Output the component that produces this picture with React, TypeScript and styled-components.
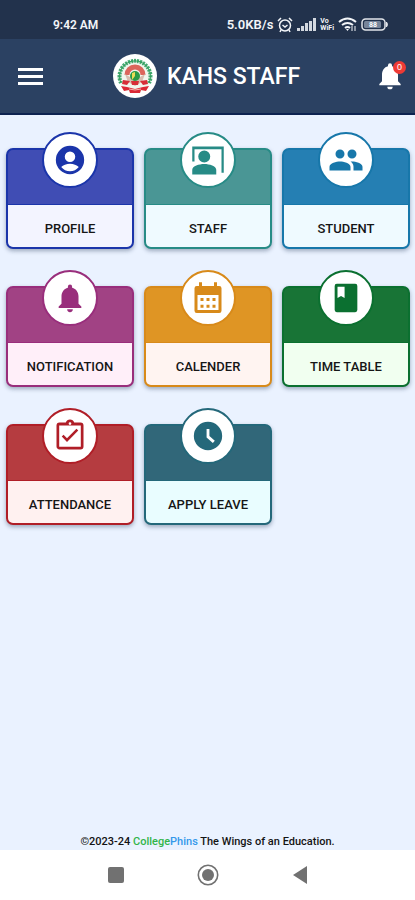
import React from "react";
import styled, { createGlobalStyle } from "styled-components";

const GlobalStyle = createGlobalStyle`
  *, *::before, *::after { box-sizing: border-box; }
  body {
    margin: 0;
    background: #eaf2ff;
    font-family: Roboto, "Liberation Sans", sans-serif;
    color: #141414;
  }
`;

const Screen = styled.div`
  min-height: 100vh;
  display: flex;
  flex-direction: column;
`;

const StatusBar = styled.div`
  display: flex;
  align-items: center;
  justify-content: space-between;
  height: 39px;
  padding: 10px 26px 0 53px;
  background: #22324c;
  color: #f3f5f8;
  font-size: 12px;
  font-weight: 600;
`;

const StatusGroup = styled.div`
  display: flex;
  align-items: center;
  gap: 4px;
  svg { display: block; }
`;

const Speed = styled.span`
  font-size: 13px;
`;

const NetLabel = styled.span`
  display: flex;
  flex-direction: column;
  font-size: 7px;
  line-height: 7px;
  font-weight: 700;
`;

const TopBar = styled.header`
  display: flex;
  align-items: center;
  justify-content: space-between;
  height: 76px;
  padding: 0 9px 0 15px;
  background: #2b4162;
  border-bottom: 2px solid #0e2350;
  color: #ffffff;
`;

const IconButton = styled.button`
  position: relative;
  display: flex;
  align-items: center;
  justify-content: center;
  width: 32px;
  height: 40px;
  padding: 0;
  border: 0;
  background: none;
  color: inherit;
  cursor: pointer;
`;

const Count = styled.span`
  position: absolute;
  top: 5px;
  right: 0;
  width: 13px;
  height: 13px;
  border-radius: 50%;
  background: #ee3a35;
  font-size: 9px;
  line-height: 13px;
  text-align: center;
`;

const Brand = styled.div`
  display: flex;
  align-items: center;
  gap: 10px;
  margin-right: 8px;
  svg { display: block; }
`;

const Title = styled.h1`
  margin: 0;
  padding-top: 2px;
  font-size: 23px;
  line-height: 32px;
  font-weight: 500;
  white-space: nowrap;
`;

const Content = styled.main`
  flex: 1;
  padding: 33px 5px 24px 6px;
`;

const Grid = styled.div`
  display: grid;
  grid-template-columns: repeat(3, 1fr);
  gap: 37px 10px;
`;

const Card = styled.button<{ $main: string; $edge: string; $tint: string }>`
  position: relative;
  display: flex;
  flex-direction: column;
  align-items: stretch;
  height: 101px;
  padding: 0;
  border: 2px solid ${(p) => p.$edge};
  border-radius: 7px;
  background: ${(p) => p.$main};
  box-shadow: 0 2px 4px rgba(40, 60, 90, 0.4);
  color: ${(p) => p.$edge};
  font-family: inherit;
  cursor: pointer;

  --tint: ${(p) => p.$tint};
`;

const Medallion = styled.span`
  position: absolute;
  top: -18px;
  left: 50%;
  transform: translateX(-50%);
  display: flex;
  align-items: center;
  justify-content: center;
  width: 56px;
  height: 56px;
  border: 2px solid currentColor;
  border-radius: 50%;
  background: #ffffff;
  svg { display: block; }
`;

const CardLabel = styled.span`
  display: flex;
  align-items: center;
  justify-content: center;
  height: 43px;
  margin-top: auto;
  padding-top: 5px;
  border-top: 1px solid currentColor;
  border-radius: 0 0 5px 5px;
  background: var(--tint);
  font-size: 13px;
  line-height: 16px;
  font-weight: 500;
  white-space: nowrap;

  b { color: #161616; font-weight: inherit; }
`;

const Footer = styled.footer`
  height: 17px;
  font-size: 11px;
  line-height: 18px;
  font-weight: 500;
  text-align: center;
`;

const BrandLink = styled.a`
  color: #32b54a;
  text-decoration: none;
  span { color: #3498ea; }
`;

const NavBar = styled.nav`
  display: flex;
  align-items: center;
  justify-content: center;
  gap: 60px;
  height: 50px;
  background: #ffffff;
  color: #717171;
`;

type IconProps = { d: string; size?: number };

const Glyph = ({ d, size = 34 }: IconProps) => (
  <svg width={size} height={size} viewBox="0 0 24 24" fill="currentColor" fillRule="evenodd" aria-hidden="true">
    <path d={d} />
  </svg>
);

const paths = {
  profile:
    "M12 2a10 10 0 1 0 0 20 10 10 0 0 0 0-20Zm0 4a3.7 3.7 0 1 1 0 7.4A3.7 3.7 0 0 1 12 6Zm0 14a8 8 0 0 1-6.2-3c1.3-1.5 3.7-2.4 6.2-2.4s4.9.9 6.2 2.4A8 8 0 0 1 12 20Z",
  staff:
    "M1.500 3h21v17.500H21V4.800H3V13H1.500ZM9.500 5.600a4 4 0 1 1 0 8 4 4 0 0 1 0-8ZM1.500 21.700v-3.200c0-2.500 4.500-3.900 8-3.900s8 1.400 8 3.900v3.200Z",
  student:
    "M16 11a3 3 0 1 0 0-6 3 3 0 0 0 0 6ZM8 11a3 3 0 1 0 0-6 3 3 0 0 0 0 6Zm0 2c-2.330 0-7 1.170-7 3.500V19h14v-2.500C15 14.170 10.330 13 8 13Zm8 0c-.29 0-.62.02-.97.05 1.160.84 1.970 1.970 1.970 3.450V19h6v-2.500c0-2.330-4.670-3.500-7-3.500Z",
  bell:
    "M12 22a2 2 0 0 0 2-2h-4a2 2 0 0 0 2 2Zm6-6v-5c0-3.070-1.640-5.640-4.500-6.320V4a1.500 1.500 0 0 0-3 0v.68C7.630 5.360 6 7.920 6 11v5l-2 2v1h16v-1Z",
  calendar:
    "M6 1.500h2V4h8V1.500h2V4h1.500A1.500 1.500 0 0 1 21 5.500v15a1.500 1.500 0 0 1-1.500 1.500h-15A1.500 1.500 0 0 1 3 20.500v-15A1.500 1.500 0 0 1 4.500 4H6ZM5 10v10h14V10ZM7 12h2v2H7Zm4 0h2v2h-2Zm4 0h2v2h-2Zm-8 4.500h2v2H7Zm4 0h2v2h-2Zm4 0h2v2h-2Z",
  book:
    "M18.500 2h-13A1.500 1.500 0 0 0 4 3.500v17A1.500 1.500 0 0 0 5.500 22h13a1.500 1.500 0 0 0 1.500-1.500v-17A1.500 1.500 0 0 0 18.500 2ZM6 4h5v8l-2.500-1.500L6 12Z",
  attendance:
    "M19 3h-4.180a3 3 0 0 0-5.640 0H5a2 2 0 0 0-2 2v14c0 1.100.9 2 2 2h14a2 2 0 0 0 2-2V5a2 2 0 0 0-2-2Zm-7-.2a.9.9 0 1 1 0 1.800.9.9 0 0 1 0-1.800ZM4.800 5h14.400v14.200H4.800ZM17.500 8.400 16.300 7.200 10 13.500l-2.300-2.300-1.200 1.200L10 16Z",
  clock:
    "M12 2a10 10 0 1 0 0 20 10 10 0 0 0 0-20Zm-1 5h2v5l3.800 3.300-1.400 1.600L11 13Z",
};

const tiles = [
  { label: "PROFILE", d: paths.profile, main: "#404db4", edge: "#1b35aa", tint: "#f3f4ff" },
  { label: "STAFF", d: paths.staff, main: "#4a9695", edge: "#278b86", tint: "#effaff", size: 36 },
  { label: "STUDENT", d: paths.student, main: "#257fb3", edge: "#1777aa", tint: "#effaff", size: 36 },
  { label: "NOTIFICATION", d: paths.bell, main: "#a14284", edge: "#992e7c", tint: "#ffeff9" },
  { label: "CALENDER", d: paths.calendar, main: "#df9524", edge: "#d88a1a", tint: "#fff4f1", size: 36 },
  { label: "TIME TABLE", d: paths.book, main: "#187436", edge: "#0b7030", tint: "#f1fff0" },
  { label: "ATTENDANCE", d: paths.attendance, main: "#b53c40", edge: "#b01e27", tint: "#fff1f0", size: 36 },
  { label: "APPLY LEAVE", d: paths.clock, main: "#316779", edge: "#24687a", tint: "#e9fdff" },
];

const Crest = () => (
  <svg width="44" height="44" viewBox="0 0 44 44" role="img" aria-label="College crest">
    <circle cx="22" cy="22" r="22" fill="#fff" />
    <circle cx="22" cy="22" r="16.500" fill="#f1f6ee" />
    <path d="M8 29A15.500 15.500 0 1 1 36 29" fill="none" stroke="#43aa70" strokeWidth="4" strokeDasharray="2 1" />
    <path d="M8 29A15.500 15.500 0 1 1 36 29" fill="none" stroke="#2f9c5c" strokeWidth="1" />
    <path d="M14 21a8 8 0 0 1 16 0" fill="none" stroke="#dc655b" strokeWidth="5" />
    <path d="M12 20l3 8 7 4 7-4 3-8-5 3-5-4-5 4Z" fill="#d9beb0" />
    <circle cx="22" cy="22" r="5" fill="#2b9a46" />
    <path d="M19 19l3-1v4l-3 4Z" fill="#eadc55" />
    <path d="M10 26l7 1-3 4-5-1ZM34 26l-7 1 3 4 5-1ZM18 27h8l-1 4h-6Z" fill="#d72f38" />
    <path d="M8 32l6 1 8 2 8-2 6-1-3 5-5-1-1 3H17l-1-3-5 1Z" fill="#db2935" />
    <path d="M16 35q6 2 12 0" fill="none" stroke="#f6b4af" strokeWidth="1" />
  </svg>
);

const StatusIcons = () => (
  <>
    <svg width="16" height="16" viewBox="0 0 16 16" fill="none" stroke="currentColor" strokeWidth="1.500" aria-label="Alarm">
      <circle cx="8" cy="8.500" r="5.500" />
      <path d="M1 4l3-3M15 4l-3-3M5.500 8L8 10l2.500-2M4 13l-1 2M12 13l1 2" />
    </svg>
    <svg width="19" height="13" viewBox="0 0 19 13" fill="#d3d8df" aria-label="Signal">
      <path d="M0 10h3v3H0ZM4 8h3v5H4ZM8 5h3v8H8ZM12 3h3v10h-3ZM16 0h3v13h-3Z" />
    </svg>
    <NetLabel><span>Vo</span><span>WiFi</span></NetLabel>
    <svg width="19" height="15" viewBox="0 0 19 15" fill="none" stroke="currentColor" strokeWidth="2" aria-label="Wi-Fi">
      <path d="M1 5q8.500-7 17 0M4 8q5.500-4 11 0M7 11q2.500-2 5 0" />
      <path d="M8 12h3l-1.500 2Z" fill="currentColor" stroke="none" />
      <path d="M14 9v5M17 9v5" strokeWidth="1" />
    </svg>
    <svg width="28" height="14" viewBox="0 0 28 14" aria-label="Battery 88%">
      <rect x="1" y="1" width="23" height="11" rx="3.500" fill="none" stroke="#e2e5ea" strokeWidth="1.500" />
      <rect x="3" y="3" width="17" height="7" rx="1.500" fill="#77859a" />
      <path d="M25.500 4q2 2.500 0 5Z" fill="#e2e5ea" stroke="#e2e5ea" />
      <text x="12" y="9" fontSize="7" fontWeight="700" fill="#fff" textAnchor="middle">88</text>
    </svg>
  </>
);

export default function App() {
  return (
    <Screen>
      <GlobalStyle />
      <StatusBar>
        <span>9:42 AM</span>
        <StatusGroup>
          <Speed>5.0KB/s</Speed>
          <StatusIcons />
        </StatusGroup>
      </StatusBar>
      <TopBar>
        <IconButton aria-label="Open menu">
          <svg width="26" height="18" viewBox="0 0 26 18" fill="currentColor">
            <path d="M0 1h25v3H0ZM0 8h25v3H0ZM0 15h25v3H0Z" />
          </svg>
        </IconButton>
        <Brand>
          <Crest />
          <Title>KAHS STAFF</Title>
        </Brand>
        <IconButton aria-label="Notifications">
          <Glyph d={paths.bell} size={32} />
          <Count>0</Count>
        </IconButton>
      </TopBar>
      <Content>
        <Grid>
          {tiles.map((t) => (
            <Card key={t.label} $main={t.main} $edge={t.edge} $tint={t.tint}>
              <Medallion>
                <Glyph d={t.d} size={t.size} />
              </Medallion>
              <CardLabel>
                <b>{t.label}</b>
              </CardLabel>
            </Card>
          ))}
        </Grid>
      </Content>
      <Footer>
        ©2023-24{" "}
        <BrandLink href="#">
          College<span>Phins</span>
        </BrandLink>{" "}
        The Wings of an Education.
      </Footer>
      <NavBar>
        <IconButton aria-label="Recent apps">
          <svg width="16" height="16" viewBox="0 0 16 16"><rect width="16" height="16" rx="2" fill="currentColor" /></svg>
        </IconButton>
        <IconButton aria-label="Home">
          <svg width="22" height="22" viewBox="0 0 22 22">
            <circle cx="11" cy="11" r="9.700" fill="none" stroke="currentColor" strokeWidth="1.600" />
            <circle cx="11" cy="11" r="6" fill="currentColor" />
          </svg>
        </IconButton>
        <IconButton aria-label="Back">
          <svg width="14" height="18" viewBox="0 0 14 18"><path d="M14 0v18L0 9Z" fill="currentColor" /></svg>
        </IconButton>
      </NavBar>
    </Screen>
  );
}
